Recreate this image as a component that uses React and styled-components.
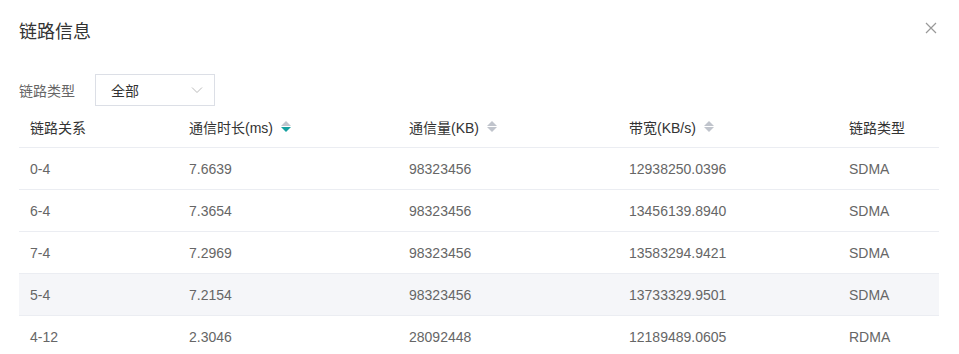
import React from 'react';
import styled, { createGlobalStyle } from 'styled-components';

const GlobalStyle = createGlobalStyle`
  body {
    margin: 0;
    background: #fff;
    font-family: "Liberation Sans", "Noto Sans CJK SC", Arial, sans-serif;
  }
`;

const Dialog = styled.div`
  position: relative;
  width: 959px;
  height: 354px;
  padding: 20px 20px 0 19px;
  box-sizing: border-box;
  overflow: hidden;
`;

const Title = styled.div`
  font-size: 18px;
  line-height: 24px;
  color: #333;
`;

const CloseBtn = styled.button`
  position: absolute;
  top: 22px;
  right: 22px;
  width: 12px;
  height: 12px;
  padding: 0;
  border: none;
  background: none;
  cursor: pointer;
`;

const FilterRow = styled.div`
  display: flex;
  align-items: center;
  gap: 20px;
  margin-top: 30px;
`;

const Label = styled.span`
  font-size: 14px;
  color: #666;
`;

const Select = styled.div`
  display: flex;
  align-items: center;
  justify-content: space-between;
  width: 120px;
  height: 32px;
  box-sizing: border-box;
  border: 1px solid #dcdfe6;
  padding: 0 11px 0 15px;
  font-size: 14px;
  color: #333;
`;

const Table = styled.table`
  width: 920px;
  border-collapse: collapse;
  table-layout: fixed;
  font-size: 14px;
`;

const Th = styled.th`
  height: 41px;
  padding: 0 0 0 11px;
  text-align: left;
  font-weight: normal;
  color: #333;
  border-bottom: 1px solid #ebedf2;
`;

const Row = styled.tr`
  background: ${(p) => (p.$hover ? '#f5f6f9' : '#fff')};
`;

const Td = styled.td`
  height: 41px;
  padding: 0 0 0 11px;
  color: #666;
  border-bottom: 1px solid #ebedf2;
`;

const HeadInner = styled.span`
  display: inline-flex;
  align-items: center;
  gap: 8px;
`;

const SortIcon = styled.span`
  display: inline-flex;
  flex-direction: column;
  gap: 1px;
`;

const Caret = styled.i`
  width: 0;
  height: 0;
  border-left: 5px solid transparent;
  border-right: 5px solid transparent;
  ${(p) =>
    p.$up
      ? `border-bottom: 5px solid ${p.$active ? '#15a0a0' : '#c0c4cc'};`
      : `border-top: 5px solid ${p.$active ? '#15a0a0' : '#c0c4cc'};`}
`;

const Sort = ({ active }) => (
  <SortIcon>
    <Caret $up $active={active === 'asc'} />
    <Caret $active={active === 'desc'} />
  </SortIcon>
);

const columns = [
  { title: '链路关系', width: 159 },
  { title: '通信时长(ms)', width: 220, sort: 'desc' },
  { title: '通信量(KB)', width: 220, sort: 'none' },
  { title: '带宽(KB/s)', width: 220, sort: 'none' },
  { title: '链路类型', width: 101 },
];

const rows = [
  ['0-4', '7.6639', '98323456', '12938250.0396', 'SDMA'],
  ['6-4', '7.3654', '98323456', '13456139.8940', 'SDMA'],
  ['7-4', '7.2969', '98323456', '13583294.9421', 'SDMA'],
  ['5-4', '7.2154', '98323456', '13733329.9501', 'SDMA'],
  ['4-12', '2.3046', '28092448', '12189489.0605', 'RDMA'],
];

export default function App() {
  return (
    <>
      <GlobalStyle />
      <Dialog>
        <Title>链路信息</Title>
        <CloseBtn aria-label="close">
          <svg width="12" height="12" viewBox="0 0 12 12">
            <path d="M1 1L11 11M11 1L1 11" stroke="#999" strokeWidth="1.2" />
          </svg>
        </CloseBtn>
        <FilterRow>
          <Label>链路类型</Label>
          <Select>
            <span>全部</span>
            <svg width="12" height="8" viewBox="0 0 12 8">
              <path d="M1 1.5L6 6.5L11 1.5" fill="none" stroke="#bbb" strokeWidth="1" />
            </svg>
          </Select>
        </FilterRow>
        <Table>
          <colgroup>
            {columns.map((c) => (
              <col key={c.title} style={{ width: c.width }} />
            ))}
          </colgroup>
          <thead>
            <tr>
              {columns.map((c) => (
                <Th key={c.title}>
                  <HeadInner>
                    {c.title}
                    {c.sort && <Sort active={c.sort} />}
                  </HeadInner>
                </Th>
              ))}
            </tr>
          </thead>
          <tbody>
            {rows.map((r, i) => (
              <Row key={r[0]} $hover={i === 3}>
                {r.map((v, j) => (
                  <Td key={j}>{v}</Td>
                ))}
              </Row>
            ))}
          </tbody>
        </Table>
      </Dialog>
    </>
  );
}
